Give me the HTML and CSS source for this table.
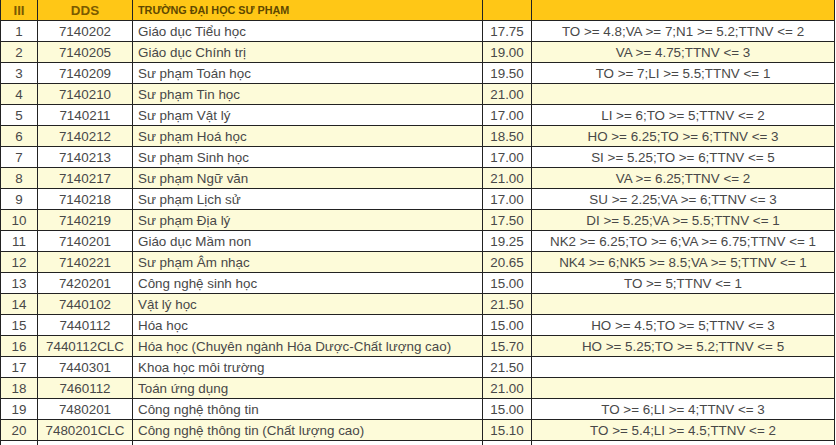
FILE: index.html
```html
<!DOCTYPE html>
<html lang="vi">
<head>
<meta charset="utf-8">
<title>Điểm chuẩn</title>
<link rel="stylesheet" href="styles.css">
</head>
<body>
<table class="scores">
  <colgroup>
    <col class="c-stt"><col class="c-code"><col class="c-name"><col class="c-score"><col class="c-cond">
  </colgroup>
  <thead>
    <tr>
      <th class="h-big">III</th>
      <th class="h-big">DDS</th>
      <th class="h-small">TRƯỜNG ĐẠI HỌC SƯ PHẠM</th>
      <th></th>
      <th></th>
    </tr>
  </thead>
  <tbody>
    <tr><td>1</td><td>7140202</td><td class="name">Giáo dục Tiểu học</td><td>17.75</td><td>TO &gt;= 4.8;VA &gt;= 7;N1 &gt;= 5.2;TTNV &lt;= 2</td></tr>
    <tr><td>2</td><td>7140205</td><td class="name">Giáo dục Chính trị</td><td>19.00</td><td>VA &gt;= 4.75;TTNV &lt;= 3</td></tr>
    <tr><td>3</td><td>7140209</td><td class="name">Sư phạm Toán học</td><td>19.50</td><td>TO &gt;= 7;LI &gt;= 5.5;TTNV &lt;= 1</td></tr>
    <tr><td>4</td><td>7140210</td><td class="name">Sư phạm Tin học</td><td>21.00</td><td></td></tr>
    <tr><td>5</td><td>7140211</td><td class="name">Sư phạm Vật lý</td><td>17.00</td><td>LI &gt;= 6;TO &gt;= 5;TTNV &lt;= 2</td></tr>
    <tr><td>6</td><td>7140212</td><td class="name">Sư phạm Hoá học</td><td>18.50</td><td>HO &gt;= 6.25;TO &gt;= 6;TTNV &lt;= 3</td></tr>
    <tr><td>7</td><td>7140213</td><td class="name">Sư phạm Sinh học</td><td>17.00</td><td>SI &gt;= 5.25;TO &gt;= 6;TTNV &lt;= 5</td></tr>
    <tr><td>8</td><td>7140217</td><td class="name">Sư phạm Ngữ văn</td><td>21.00</td><td>VA &gt;= 6.25;TTNV &lt;= 2</td></tr>
    <tr><td>9</td><td>7140218</td><td class="name">Sư phạm Lịch sử</td><td>17.00</td><td>SU &gt;= 2.25;VA &gt;= 6;TTNV &lt;= 3</td></tr>
    <tr><td>10</td><td>7140219</td><td class="name">Sư phạm Địa lý</td><td>17.50</td><td>DI &gt;= 5.25;VA &gt;= 5.5;TTNV &lt;= 1</td></tr>
    <tr><td>11</td><td>7140201</td><td class="name">Giáo dục Mầm non</td><td>19.25</td><td>NK2 &gt;= 6.25;TO &gt;= 6;VA &gt;= 6.75;TTNV &lt;= 1</td></tr>
    <tr><td>12</td><td>7140221</td><td class="name">Sư phạm Âm nhạc</td><td>20.65</td><td>NK4 &gt;= 6;NK5 &gt;= 8.5;VA &gt;= 5;TTNV &lt;= 1</td></tr>
    <tr><td>13</td><td>7420201</td><td class="name">Công nghệ sinh học</td><td>15.00</td><td>TO &gt;= 5;TTNV &lt;= 1</td></tr>
    <tr><td>14</td><td>7440102</td><td class="name">Vật lý học</td><td>21.50</td><td></td></tr>
    <tr><td>15</td><td>7440112</td><td class="name">Hóa học</td><td>15.00</td><td>HO &gt;= 4.5;TO &gt;= 5;TTNV &lt;= 3</td></tr>
    <tr><td>16</td><td>7440112CLC</td><td class="name">Hóa học (Chuyên ngành Hóa Dược-Chất lượng cao)</td><td>15.70</td><td>HO &gt;= 5.25;TO &gt;= 5.2;TTNV &lt;= 5</td></tr>
    <tr><td>17</td><td>7440301</td><td class="name">Khoa học môi trường</td><td>21.50</td><td></td></tr>
    <tr><td>18</td><td>7460112</td><td class="name">Toán ứng dụng</td><td>21.00</td><td></td></tr>
    <tr><td>19</td><td>7480201</td><td class="name">Công nghệ thông tin</td><td>15.00</td><td>TO &gt;= 6;LI &gt;= 4;TTNV &lt;= 3</td></tr>
    <tr><td>20</td><td>7480201CLC</td><td class="name">Công nghệ thông tin (Chất lượng cao)</td><td>15.10</td><td>TO &gt;= 5.4;LI &gt;= 4.5;TTNV &lt;= 2</td></tr>
    <tr class="spare"><td></td><td></td><td></td><td></td><td></td></tr>
  </tbody>
</table>
</body>
</html>
```

FILE: styles.css
```css
html, body {
  margin: 0;
  padding: 0;
  background: #ffffff;
}

.scores {
  border-collapse: collapse;
  table-layout: fixed;
  width: 834px;
  font-family: "Liberation Sans", Arial, sans-serif;
  font-size: 13.4px;
  color: #484848;
}

.c-stt { width: 37px; }
.c-code { width: 95px; }
.c-name { width: 350px; }
.c-score { width: 49px; }
.c-cond { width: 303px; }

.scores th,
.scores td {
  border: 1px solid #222222;
  padding: 0;
  text-align: center;
  white-space: nowrap;
  overflow: hidden;
}

.scores thead th {
  border-top: 0;
  background: #ffc716;
  color: #7a5a00;
  height: 20px;
}

.scores .h-big {
  font-size: 13.4px;
  font-weight: bold;
}

.scores .h-small {
  font-size: 10.8px;
  font-weight: bold;
  color: #5e4800;
  text-align: left;
  padding-left: 5px;
}

.scores tbody tr {
  height: 21px;
}

.scores tbody tr:nth-child(even) td {
  background: #fdfbd9;
}

.scores td.name {
  text-align: left;
  padding-left: 5px;
}
```
